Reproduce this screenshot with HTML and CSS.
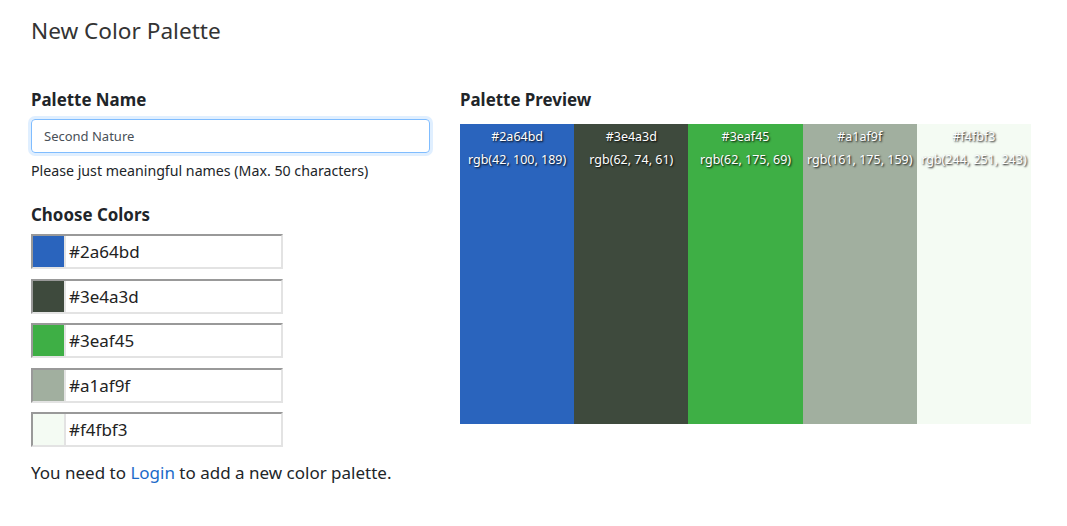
FILE: index.html
```html
<!DOCTYPE html>
<html lang="en">
<head>
<meta charset="utf-8">
<title>New Color Palette</title>
<link rel="stylesheet" href="styles.css">
</head>
<body>
<div class="page">
  <h1 class="title">New Color Palette</h1>
  <div class="row">
    <div class="col-left">
      <h2 class="label">Palette Name</h2>
      <div class="name-input">Second Nature</div>
      <p class="hint">Please just meaningful names (Max. 50 characters)</p>
      <h2 class="label colors-label">Choose Colors</h2>
      <div class="color-list">
        <div class="color-row"><span class="swatch" style="background:#2a64bd"></span><span class="hex">#2a64bd</span></div>
        <div class="color-row"><span class="swatch" style="background:#3e4a3d"></span><span class="hex">#3e4a3d</span></div>
        <div class="color-row"><span class="swatch" style="background:#3eaf45"></span><span class="hex">#3eaf45</span></div>
        <div class="color-row"><span class="swatch" style="background:#a1af9f"></span><span class="hex">#a1af9f</span></div>
        <div class="color-row"><span class="swatch" style="background:#f4fbf3"></span><span class="hex">#f4fbf3</span></div>
      </div>
      <p class="login">You need to <a href="#">Login</a> to add a new color palette.</p>
    </div>
    <div class="col-right">
      <h2 class="label">Palette Preview</h2>
      <div class="preview">
        <div class="block" style="background:#2a64bd"><span>#2a64bd</span><span>rgb(42, 100, 189)</span></div>
        <div class="block" style="background:#3e4a3d"><span>#3e4a3d</span><span>rgb(62, 74, 61)</span></div>
        <div class="block" style="background:#3eaf45"><span>#3eaf45</span><span>rgb(62, 175, 69)</span></div>
        <div class="block" style="background:#a1af9f"><span>#a1af9f</span><span>rgb(161, 175, 159)</span></div>
        <div class="block" style="background:#f4fbf3"><span>#f4fbf3</span><span>rgb(244, 251, 243)</span></div>
      </div>
    </div>
  </div>
</div>
</body>
</html>
```

FILE: styles.css
```css
* { box-sizing: border-box; }
html, body { margin: 0; padding: 0; background: #fff; }
body {
  font-family: "Noto Sans", "Open Sans", sans-serif;
  color: #212529;
  font-size: 15px;
}
.page { padding: 15px 36px 0 31px; }
.title {
  margin: 0;
  font-size: 22.6px;
  font-weight: 400;
  line-height: 32px;
  color: #333;
}
.row {
  display: flex;
  gap: 30px;
  margin-top: 41px;
}
.col-left { width: 399px; flex: none; }
.col-right { width: 571px; flex: none; }
.label {
  margin: 0;
  font-size: 16.9px;
  font-weight: 700;
  line-height: 24px;
  color: #212529;
}
.name-input {
  margin-top: 7px;
  height: 34px;
  border: 1px solid #80bdff;
  border-radius: 4px;
  box-shadow: 0 0 0 3px rgba(0, 123, 255, 0.12);
  padding: 0 12px;
  font-size: 13px;
  line-height: 32px;
  color: #495057;
}
.hint {
  margin: 7px 0 0;
  font-size: 14.2px;
  line-height: 21px;
}
.colors-label { margin-top: 22px; }
.color-list {
  margin-top: 7px;
  display: flex;
  flex-direction: column;
  gap: 9.5px;
}
.color-row {
  display: flex;
  width: 252px;
  height: 35px;
  border-top: 2px solid #999;
  border-left: 2px solid #999;
  border-bottom: 2px solid #e3e3e3;
  border-right: 2px solid #e3e3e3;
}
.swatch {
  width: 33px;
  flex: none;
  border-right: 2px solid #e3e3e3;
}
.hex {
  padding-left: 3px;
  font-size: 17px;
  line-height: 31px;
  color: #222;
}
.login {
  margin: 13px 0 0;
  font-size: 17px;
  line-height: 26px;
}
.login a { color: #1b6ac9; text-decoration: none; }
.preview {
  margin-top: 12px;
  display: flex;
  height: 300px;
}
.block {
  flex: 1;
  display: flex;
  flex-direction: column;
  align-items: center;
  padding-top: 1px;
  color: #fff;
  font-size: 12.5px;
  line-height: 23px;
  text-shadow: 1px 1px 2px #000;
}
```
